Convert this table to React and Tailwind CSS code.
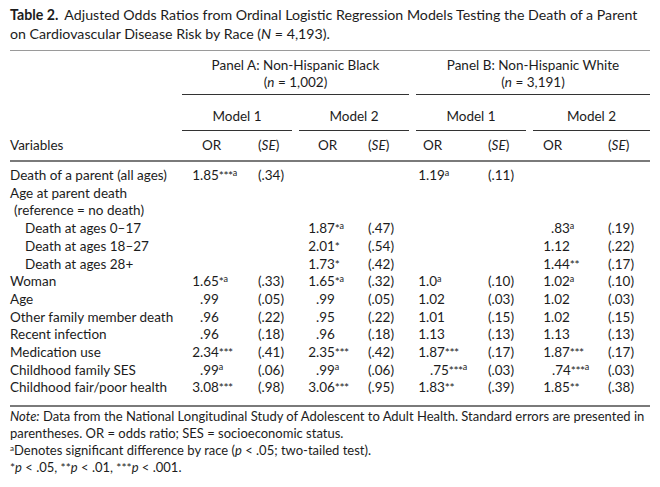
const orPad = ["pl-[10px]", "pl-[9px]", "pl-[2px]", "pl-[10px]"];
const sePad = ["pl-[16px]", "pl-[9px]", "pl-[12px]", "pl-[15px]"];
const orHead = ["pl-[20px]", "pl-[19px]", "pl-[7px]", "pl-[10px]"];

const rows = [
  { label: "Death of a parent (all ages)", v: [["1.85", "***a", "(.34)"], null, ["1.19", "a", "(.11)"], null] },
  { label: "Age at parent death", v: [null, null, null, null] },
  { label: "(reference = no death)", indent: "pl-[4px]", v: [null, null, null, null] },
  { label: "Death at ages 0–17", indent: "pl-[15px]", v: [null, ["1.87", "*a", "(.47)"], null, [".83", "a", "(.19)"]] },
  { label: "Death at ages 18–27", indent: "pl-[15px]", v: [null, ["2.01", "*", "(.54)"], null, ["1.12", "", "(.22)"]] },
  { label: "Death at ages 28+", indent: "pl-[15px]", v: [null, ["1.73", "*", "(.42)"], null, ["1.44", "**", "(.17)"]] },
  { label: "Woman", v: [["1.65", "*a", "(.33)"], ["1.65", "*a", "(.32)"], ["1.0", "a", "(.10)"], ["1.02", "a", "(.10)"]] },
  { label: "Age", v: [[".99", "", "(.05)"], [".99", "", "(.05)"], ["1.02", "", "(.03)"], ["1.02", "", "(.03)"]] },
  { label: "Other family member death", v: [[".96", "", "(.22)"], [".95", "", "(.22)"], ["1.01", "", "(.15)"], ["1.02", "", "(.15)"]] },
  { label: "Recent infection", v: [[".96", "", "(.18)"], [".96", "", "(.18)"], ["1.13", "", "(.13)"], ["1.13", "", "(.13)"]] },
  { label: "Medication use", v: [["2.34", "***", "(.41)"], ["2.35", "***", "(.42)"], ["1.87", "***", "(.17)"], ["1.87", "***", "(.17)"]] },
  { label: "Childhood family SES", v: [[".99", "a", "(.06)"], [".99", "a", "(.06)"], [".75", "***a", "(.03)", "ml-[4px]"], [".74", "***a", "(.03)", "ml-[1px]"]] },
  { label: "Childhood fair/poor health", v: [["3.08", "***", "(.98)"], ["3.06", "***", "(.95)"], ["1.83", "**", "(.39)"], ["1.85", "**", "(.38)"]] },
];

const cols = "grid grid-cols-[172px_60px_50px_7px_60px_50px_7px_60px_50px_7px_60px_57px]";

function Marks({ text }) {
  const stars = text.replace("a", "");
  const hasA = text.includes("a");
  return (
    <>
      {stars && <span className="text-[12px] tracking-[-0.5px]">{stars}</span>}
      {hasA && <sup className="text-[9px]">a</sup>}
    </>
  );
}

function OrCell({ val, pad }) {
  if (!val) return <div />;
  const [num, sup, , nudge] = val;
  const dot = num.indexOf(".");
  return (
    <div className={`${pad} whitespace-nowrap`}>
      <span className="inline-block w-[8px] text-right">{num.slice(0, dot)}</span>
      <span className={nudge}>{num.slice(dot)}</span>
      {sup && <Marks text={sup} />}
    </div>
  );
}

function SeCell({ val, pad }) {
  if (!val) return <div />;
  return <div className={pad}>{val[2]}</div>;
}

export default function App() {
  return (
    <div className="w-[660px] h-[487px] bg-white text-[#1c1c1c] font-['Lato',sans-serif] overflow-hidden">
      {/* title */}
      <div className="h-[50px] px-[10px] pt-[5px] text-[14.2px] leading-[19px] whitespace-nowrap">
        <div>
          <span className="font-bold">Table 2.</span>
          <span className="ml-[6px]">
            Adjusted Odds Ratios from Ordinal Logistic Regression Models Testing the Death of a Parent
          </span>
        </div>
        <div>
          on Cardiovascular Disease Risk by Race (<i>N</i> = 4,193).
        </div>
      </div>

      <div className="mx-[10px] w-[640px] text-[13.5px]">
        <div className="h-px bg-[#9a9a9a]" />

        {/* panel headers */}
        <div className="grid grid-cols-[172px_227px_7px_234px] leading-[17px]">
          <div />
          <div className="pt-[6px] pb-[3px] border-b border-[#333] text-center">
            <div>Panel A: Non-Hispanic Black</div>
            <div>
              (<i>n</i> = 1,002)
            </div>
          </div>
          <div />
          <div className="pt-[6px] pb-[3px] border-b border-[#333] text-center">
            <div>Panel B: Non-Hispanic White</div>
            <div>
              (<i>n</i> = 3,191)
            </div>
          </div>
        </div>

        {/* model headers */}
        <div className="grid grid-cols-[172px_110px_7px_110px_7px_110px_7px_117px] leading-[17px]">
          <div />
          <div className="pt-[13px] pb-[5px] border-b border-[#333] text-center">Model 1</div>
          <div />
          <div className="pt-[13px] pb-[5px] border-b border-[#333] text-center">Model 2</div>
          <div />
          <div className="pt-[13px] pb-[5px] border-b border-[#333] text-center">Model 1</div>
          <div />
          <div className="pt-[13px] pb-[5px] border-b border-[#333] text-center">Model 2</div>
        </div>

        {/* column headers */}
        <div className={`${cols} leading-[17px] pt-[6px] pb-[6px] border-b-2 border-[#7a7a7a]`}>
          <div>Variables</div>
          {[0, 1, 2, 3].map((i) => [
            <div key={`o${i}`} className={orHead[i]}>OR</div>,
            <div key={`s${i}`} className={sePad[i]}>
              (<i>SE</i>)
            </div>,
            i < 3 ? <div key={`g${i}`} /> : null,
          ])}
        </div>

        {/* body */}
        <div className="pt-[5px] pb-[8px] border-b-2 border-[#7a7a7a] leading-[17.7px]">
          {rows.map((r) => (
            <div key={r.label} className={cols}>
              <div className={`${r.indent || ""} whitespace-nowrap`}>{r.label}</div>
              {r.v.map((val, i) => [
                <OrCell key={`o${i}`} val={val} pad={orPad[i]} />,
                <SeCell key={`s${i}`} val={val} pad={sePad[i]} />,
                i < 3 ? <div key={`g${i}`} /> : null,
              ])}
            </div>
          ))}
        </div>
      </div>

      {/* notes */}
      <div className="px-[10px] pt-[1px] text-[13px] leading-[17px] whitespace-nowrap">
        <div>
          <i>Note:</i> Data from the National Longitudinal Study of Adolescent to Adult Health. Standard errors are presented in
        </div>
        <div>parentheses. OR = odds ratio; SES = socioeconomic status.</div>
        <div>
          <sup className="text-[8px]">a</sup>Denotes significant difference by race (<i>p</i> &lt; .05; two-tailed test).
        </div>
        <div>
          <span className="text-[12px]">*</span>
          <i>p</i> &lt; .05, <span className="text-[12px]">**</span>
          <i>p</i> &lt; .01, <span className="text-[12px]">***</span>
          <i>p</i> &lt; .001.
        </div>
      </div>
    </div>
  );
}
